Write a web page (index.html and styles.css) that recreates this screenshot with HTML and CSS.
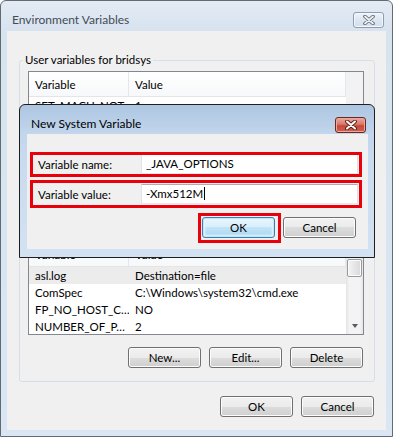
FILE: index.html
```html
<!DOCTYPE html>
<html>
<head>
    <title>Environment Variables</title>
    <meta charset="UTF-8">
    <link rel="stylesheet" href="styles.css">
</head>
<body>
    <div class="window">
        <div class="titlebar">
            <span class="title">Environment Variables</span>
            <span class="close close-inactive">
                <svg width="12" height="10" viewBox="0 0 12 10">
                    <path d="M2 1.5 L10 8.5 M10 1.5 L2 8.5" stroke="#5d6670" stroke-width="3.6" stroke-linecap="round"/>
                    <path d="M2 1.5 L10 8.5 M10 1.5 L2 8.5" stroke="#eef2f6" stroke-width="1.8" stroke-linecap="round"/>
                </svg>
            </span>
        </div>
        <div class="client">
            <fieldset class="group">
                <legend>User variables for bridsys</legend>
                <div class="list list-user">
                    <div class="list-main">
                        <div class="list-head">
                            <span class="col-var">Variable</span>
                            <span class="col-val">Value</span>
                        </div>
                        <div class="row"><span class="col-var">SET_MACH_NOT…</span><span class="col-val">1</span></div>
                        <div class="row"><span class="col-var">TEMP</span><span class="col-val">%USERPROFILE%\AppData\Local\Temp</span></div>
                        <div class="row"><span class="col-var">TMP</span><span class="col-val">%USERPROFILE%\AppData\Local\Temp</span></div>
                    </div>
                    <div class="scrollbar scrollbar-flat"></div>
                </div>
                <div class="list list-sys">
                    <div class="list-main">
                        <div class="list-head">
                            <span class="col-var">Variable</span>
                            <span class="col-val">Value</span>
                        </div>
                        <div class="row selected"><span class="col-var">asl.log</span><span class="col-val">Destination=file</span></div>
                        <div class="row"><span class="col-var">ComSpec</span><span class="col-val">C:\Windows\system32\cmd.exe</span></div>
                        <div class="row"><span class="col-var">FP_NO_HOST_C…</span><span class="col-val">NO</span></div>
                        <div class="row"><span class="col-var">NUMBER_OF_P…</span><span class="col-val">2</span></div>
                    </div>
                    <div class="scrollbar">
                        <div class="sb-btn"><span class="arrow-up"></span></div>
                        <div class="thumb"></div>
                        <div class="sb-track"></div>
                        <div class="sb-btn"><span class="arrow-down"></span></div>
                    </div>
                </div>
                <div class="btn-row group-buttons">
                    <button class="btn">New...</button>
                    <button class="btn">Edit...</button>
                    <button class="btn">Delete</button>
                </div>
            </fieldset>
            <div class="btn-row main-buttons">
                <button class="btn">OK</button>
                <button class="btn">Cancel</button>
            </div>
        </div>

        <div class="dialog">
            <div class="titlebar dialog-titlebar">
                <span class="title dialog-title">New System Variable</span>
                <span class="close close-red">
                    <svg width="12" height="10" viewBox="0 0 12 10">
                        <path d="M2 1.5 L10 8.5 M10 1.5 L2 8.5" stroke="#5a1f1a" stroke-width="3.8" stroke-linecap="round"/>
                        <path d="M2 1.5 L10 8.5 M10 1.5 L2 8.5" stroke="#ffffff" stroke-width="2" stroke-linecap="round"/>
                    </svg>
                </span>
            </div>
            <div class="dialog-client">
                <div class="field">
                    <label>Variable name:</label>
                    <div class="input">_JAVA_OPTIONS</div>
                </div>
                <div class="field">
                    <label>Variable value:</label>
                    <div class="input">-Xmx512M<span class="caret"></span></div>
                </div>
                <div class="btn-row dlg-buttons">
                    <button class="btn btn-default">OK</button>
                    <button class="btn">Cancel</button>
                </div>
                <div class="mark mark-name"></div>
                <div class="mark mark-value"></div>
                <div class="mark mark-ok"></div>
            </div>
        </div>
    </div>
</body>
</html>
```

FILE: styles.css
```css
body{
    margin: 0;
    padding: 0;
    font-family: Lato, "Noto Sans", sans-serif;
    font-size: 11.5px;
    color: #000000;
    background-color: #ffffff;
}
.window{
    position: relative;
    width: 393px;
    height: 437px;
    box-sizing: border-box;
    border: 1px solid #646a72;
    border-radius: 6px 6px 0 0;
    background: linear-gradient(#e3ebf4, #d8e3f0 30px, #dae6f3);
    display: flex;
    flex-direction: column;
    overflow: hidden;
}
.titlebar{
    display: flex;
    height: 30px;
    padding-left: 11px;
    padding-right: 8px;
    flex-shrink: 0;
}
.title{
    flex: 1;
    padding-top: 11px;
    line-height: 16px;
    font-size: 12px;
    color: #434b55;
}
.close{
    margin-top: 11px;
    width: 31px;
    height: 16px;
    box-sizing: border-box;
    border-radius: 3px;
    display: flex;
    align-items: center;
    justify-content: center;
}
.close-inactive{
    border: 1px solid #8c9cb2;
    background: linear-gradient(#eef3f8, #dde6f0 50%, #d3dfeb);
    box-shadow: inset 0 0 0 1px #f4f7fb;
}
.close-red{
    margin-top: 12px;
    border: 1px solid #6e2620;
    background: linear-gradient(#e8ab9f, #d9786a 45%, #c8473a 55%, #d0624f);
    box-shadow: inset 0 0 0 1px #eba89b;
}
.client{
    flex: 1;
    margin: 0 6px 6px;
    background-color: #f0f0f0;
    display: flex;
    flex-direction: column;
}
.group{
    margin: 21px 11px 0 12px;
    padding: 3px 10px 13px 8px;
    border: 1px solid #d5dfe5;
    border-radius: 3px;
    min-width: 0;
}
.group legend{
    margin-left: -5px;
    padding: 0 2px;
    line-height: 16px;
}
.list{
    box-sizing: border-box;
    border: 1px solid #828790;
    background-color: #ffffff;
    display: flex;
    overflow: hidden;
}
.list-user{
    height: 130px;
}
.list-sys{
    height: 94px;
    margin-top: 40px;
}
.list-main{
    flex: 1;
    min-width: 0;
    display: flex;
    flex-direction: column;
}
.list-head{
    display: flex;
    height: 25px;
    box-sizing: border-box;
    border-bottom: 1px solid #e5e5e5;
    background: linear-gradient(#ffffff, #f7f8fa);
    flex-shrink: 0;
}
.list-head span{
    display: flex;
    align-items: center;
    border-right: 1px solid #e3e8ee;
}
.col-var{
    width: 100px;
    padding-left: 6px;
    box-sizing: border-box;
    white-space: nowrap;
    overflow: hidden;
    flex-shrink: 0;
}
.col-val{
    flex: 1;
    padding-left: 6px;
    white-space: nowrap;
    overflow: hidden;
}
.row{
    display: flex;
    height: 17px;
    line-height: 17px;
    flex-shrink: 0;
}
.row.selected{
    background-color: #ececec;
}
.scrollbar{
    width: 17px;
    flex-shrink: 0;
    display: flex;
    flex-direction: column;
    background: linear-gradient(to right, #e3e3e3, #f3f3f3 3px, #f3f3f3 14px, #e6e6e6);
}
.scrollbar-flat{
    background: #f2f2f2;
}
.sb-btn{
    height: 17px;
    display: flex;
    align-items: center;
    justify-content: center;
    flex-shrink: 0;
}
.arrow-up, .arrow-down{
    width: 0;
    height: 0;
    border-left: 3.5px solid transparent;
    border-right: 3.5px solid transparent;
}
.arrow-up{
    border-bottom: 4px solid #5a5a5a;
}
.arrow-down{
    border-top: 4px solid #5a5a5a;
}
.thumb{
    height: 18px;
    margin: 0 1px;
    box-sizing: border-box;
    border: 1px solid #9a9a9a;
    border-radius: 2px;
    background: linear-gradient(to right, #f4f4f4, #e6e6e6 50%, #d9d9d9);
    box-shadow: inset 0 0 0 1px #fbfbfb;
    flex-shrink: 0;
}
.sb-track{
    flex: 1;
}
.btn-row{
    display: flex;
    justify-content: flex-end;
    gap: 8px;
}
.group-buttons{
    margin-top: 12px;
    margin-right: 1px;
}
.main-buttons{
    margin: 14px 12px 0 0;
}
.btn{
    width: 73px;
    height: 21px;
    box-sizing: border-box;
    padding: 0;
    border: 1px solid #707070;
    border-radius: 3px;
    background: linear-gradient(#f2f2f2, #ebebeb 50%, #dddddd 50%, #cfcfcf);
    box-shadow: inset 0 0 0 1px #fcfcfc;
    font-family: inherit;
    font-size: 11.5px;
    color: #000000;
}
.btn-default{
    border-color: #3c7fb1;
    background: linear-gradient(#e8f5fc, #d9effc 50%, #c2e4f8 50%, #a9d7f3);
    box-shadow: inset 0 0 0 1px #bfe6fb, inset 0 0 2px 2px #e6f5fd;
}
.dialog{
    position: absolute;
    left: 18px;
    top: 103px;
    width: 356px;
    height: 154px;
    box-sizing: border-box;
    border: 1px solid #1e1e1e;
    border-radius: 6px 6px 0 0;
    background: linear-gradient(#aec6e2, #c2d6ec 29px, #c9dbef 60px, #d3e2f3);
    display: flex;
    flex-direction: column;
}
.dialog-titlebar{
    height: 29px;
}
.dialog-title{
    color: #000000;
}
.dialog-client{
    position: relative;
    margin: 0 6px 8px 7px;
    height: 115px;
    box-sizing: border-box;
    padding-top: 20px;
    background-color: #f0f0f0;
}
.field{
    display: flex;
    align-items: center;
    height: 20px;
}
.field + .field{
    margin-top: 10px;
}
.field label{
    width: 114px;
    padding-left: 11px;
    box-sizing: border-box;
}
.input{
    width: 217px;
    height: 20px;
    box-sizing: border-box;
    border: 1px solid #abadb3;
    border-color: #abadb3 #dbdfe6 #e3e9ef #e2e3ea;
    background-color: #ffffff;
    padding-left: 4px;
    line-height: 18px;
    white-space: nowrap;
}
.caret{
    display: inline-block;
    width: 1px;
    height: 13px;
    margin-left: 1px;
    background-color: #000000;
    vertical-align: -2px;
}
.dlg-buttons{
    margin-top: 13px;
    margin-right: 12px;
}
.mark{
    position: absolute;
    box-sizing: border-box;
    border: 3px solid #e8000b;
}
.mark-name{
    left: 3px;
    top: 18px;
    width: 332px;
    height: 25px;
}
.mark-value{
    left: 3px;
    top: 46px;
    width: 332px;
    height: 28px;
}
.mark-ok{
    left: 171px;
    top: 79px;
    width: 83px;
    height: 30px;
}
```
